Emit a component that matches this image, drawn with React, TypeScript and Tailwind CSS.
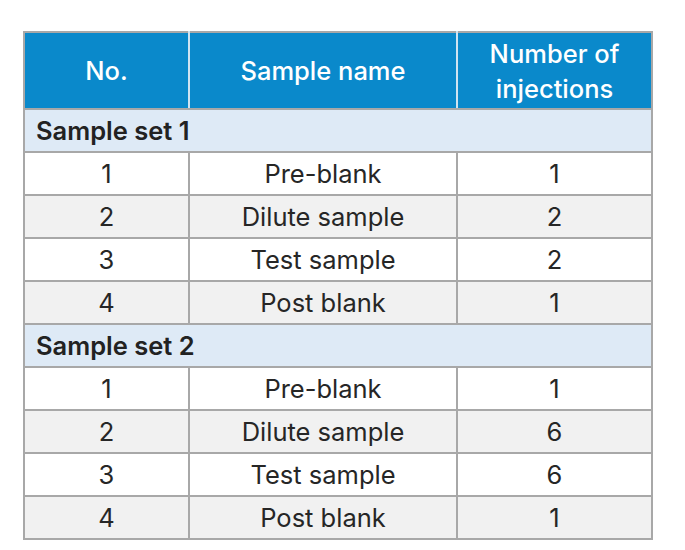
import React from "react";

type Row = { no: string; name: string; n: string };

const set1: Row[] = [
  { no: "1", name: "Pre-blank", n: "1" },
  { no: "2", name: "Dilute sample", n: "2" },
  { no: "3", name: "Test sample", n: "2" },
  { no: "4", name: "Post blank", n: "1" },
];
const set2: Row[] = [
  { no: "1", name: "Pre-blank", n: "1" },
  { no: "2", name: "Dilute sample", n: "6" },
  { no: "3", name: "Test sample", n: "6" },
  { no: "4", name: "Post blank", n: "1" },
];

function Body({ title, rows }: { title: string; rows: Row[] }) {
  return (
    <>
      <tr className="h-[43px] bg-[#deeaf6]">
        <td colSpan={3} className="border-2 border-[#a8a8a8] pl-[11px] font-semibold text-[#222]">
          {title}
        </td>
      </tr>
      {rows.map((r, i) => (
        <tr key={i} className={`h-[43px] ${i % 2 === 1 ? "bg-[#f1f1f1]" : "bg-white"}`}>
          <td className="border-2 border-[#a8a8a8] text-center">{r.no}</td>
          <td className="border-2 border-[#a8a8a8] text-center">{r.name}</td>
          <td className="border-2 border-[#a8a8a8] text-center">{r.n}</td>
        </tr>
      ))}
    </>
  );
}

export default function App() {
  return (
    <div className="w-[685px] h-[550px] bg-white pt-[31px] pl-[23px]" style={{ fontFamily: "Inter, 'Liberation Sans', sans-serif" }}>
      <table className="border-collapse w-[628px] text-[25.5px] leading-[30px] text-[#262626] table-fixed">
        <colgroup>
          <col className="w-[165px]" />
          <col className="w-[268px]" />
          <col className="w-[195px]" />
        </colgroup>
        <thead>
          <tr className="h-[77px] bg-[#0a89cb] text-white">
            <th className="border-2 border-[#a8a8a8] border-r-[#cfe3f1] font-medium">No.</th>
            <th className="border-2 border-[#a8a8a8] border-r-[#cfe3f1] border-l-[#cfe3f1] font-medium">Sample name</th>
            <th className="border-2 border-[#a8a8a8] border-l-[#cfe3f1] font-medium leading-[35px]">
              Number of<br />injections
            </th>
          </tr>
        </thead>
        <tbody>
          <Body title="Sample set 1" rows={set1} />
          <Body title="Sample set 2" rows={set2} />
        </tbody>
      </table>
    </div>
  );
}
